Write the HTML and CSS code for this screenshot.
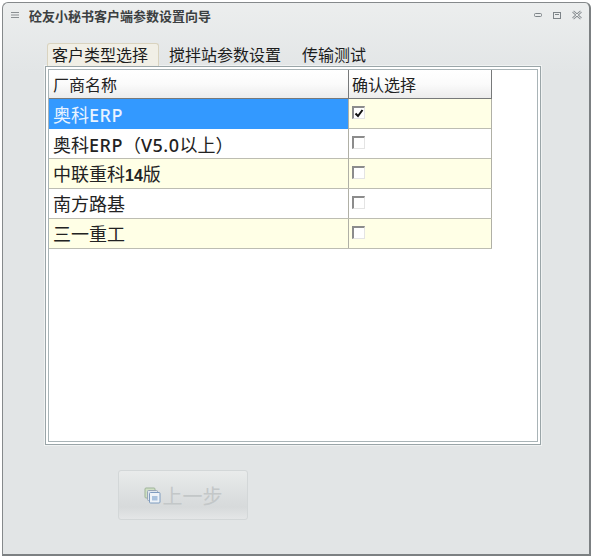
FILE: index.html
```html
<!DOCTYPE html>
<html lang="zh-CN">
<head>
    <meta charset="UTF-8">
    <meta name="viewport" content="width=device-width, initial-scale=1.0">
    <title>砼友小秘书客户端参数设置向导</title>
    <link rel="stylesheet" href="styles.css">
</head>
<body>
    <div class="window">
        <div class="title-bar">
            <svg class="sys-icon" width="10" height="8" viewBox="0 0 10 8">
                <path d="M1 1.5h8M1 4h8M1 6.5h8" stroke="#8a8f92" stroke-width="1" fill="none"/>
            </svg>
            <span class="title-text">砼友小秘书客户端参数设置向导</span>
            <div class="win-buttons">
                <svg width="10" height="6" viewBox="0 0 10 6">
                    <rect x="1.5" y="1.5" width="7" height="3" rx="1" fill="none" stroke="#7d8488"/>
                </svg>
                <svg width="10" height="9" viewBox="0 0 10 9">
                    <rect x="1.5" y="1.5" width="7" height="6" fill="none" stroke="#7d8488"/>
                    <path d="M3 3.5h4" stroke="#7d8488"/>
                </svg>
                <svg width="12" height="10" viewBox="0 0 12 10">
                    <path d="M2 1.5l8 7M10 1.5l-8 7" stroke="#868c90" stroke-width="2.6" fill="none"/>
                    <path d="M2 1.5l8 7M10 1.5l-8 7" stroke="#f2f4f4" stroke-width="1" fill="none"/>
                </svg>
            </div>
        </div>

        <div class="tabs">
            <div class="tab active">客户类型选择</div>
            <div class="tab">搅拌站参数设置</div>
            <div class="tab">传输测试</div>
        </div>

        <div class="tab-panel">
            <div class="grid">
                <div class="grid-row header">
                    <div class="cell name">厂商名称</div>
                    <div class="cell check">确认选择</div>
                </div>
                <div class="grid-row odd selected">
                    <div class="cell name">奥科<span class="latin">ERP</span></div>
                    <div class="cell check"><span class="checkbox checked">
                        <svg width="10" height="9" viewBox="0 0 10 9"><path d="M1.5 4.5l2.5 2.5 4.5-6" stroke="#111" stroke-width="2" fill="none"/></svg>
                    </span></div>
                </div>
                <div class="grid-row">
                    <div class="cell name">奥科<span class="latin">ERP</span>（<span class="latin">V5.0</span>以上）</div>
                    <div class="cell check"><span class="checkbox"></span></div>
                </div>
                <div class="grid-row odd">
                    <div class="cell name">中联重科<span class="digits">14</span>版</div>
                    <div class="cell check"><span class="checkbox"></span></div>
                </div>
                <div class="grid-row">
                    <div class="cell name">南方路基</div>
                    <div class="cell check"><span class="checkbox"></span></div>
                </div>
                <div class="grid-row odd">
                    <div class="cell name">三一重工</div>
                    <div class="cell check"><span class="checkbox"></span></div>
                </div>
            </div>
        </div>

        <div class="actions">
            <button class="prev-btn" disabled>
                <svg width="17" height="17" viewBox="0 0 17 17">
                    <rect x="1" y="1" width="10" height="10" rx="1" fill="#cfe0c4" stroke="#9fb39a"/>
                    <rect x="3.5" y="3.5" width="10" height="10" rx="1" fill="#dfe6ee" stroke="#9aa8b8"/>
                    <rect x="5.5" y="5.5" width="10.5" height="10.5" rx="1" fill="#eef3f8" stroke="#7f9cc0"/>
                    <rect x="8" y="9" width="5.5" height="4.5" fill="#a9c2de"/>
                </svg>
                <span>上一步</span>
            </button>
        </div>
    </div>
</body>
</html>
```

FILE: styles.css
```css
html, body {
    margin: 0;
    height: 100%;
}
body {
    background-color: #fff;
    font-family: "Liberation Sans", "Noto Sans CJK SC", sans-serif;
    color: #222;
}
.window {
    box-sizing: border-box;
    width: 589px;
    height: 554px;
    margin: 2px 0 0 2px;
    background: linear-gradient(#eceeee 0, #e2e5e6 70px);
    border: 1px solid #85898b;
    border-right: 2px solid #7c8082;
    border-bottom: 2px solid #7c8082;
    border-radius: 6px 6px 0 0;
}
.title-bar {
    display: flex;
    align-items: center;
    height: 24px;
    padding: 0 6px 0 7px;
}
.sys-icon {
    margin-right: 9px;
}
.title-text {
    font-size: 13px;
    font-weight: bold;
    color: #3c3f41;
}
.win-buttons {
    display: flex;
    align-items: center;
    gap: 9px;
    margin-left: auto;
}

.tabs {
    display: flex;
    height: 24px;
    margin-top: 16px;
    padding-left: 44px;
}
.tab {
    box-sizing: border-box;
    height: 23px;
    padding: 1px 0 0 6px;
    margin-right: 15px;
    font-size: 16px;
    line-height: 23px;
    color: #1c1c1c;
}
.tab.active {
    width: 112px;
    margin-right: 4px;
    background-color: #f1efe6;
    border: 1px solid #d9d3bf;
    border-bottom: none;
    border-radius: 3px 3px 0 0;
    line-height: 22px;
    padding-left: 4px;
}

.tab-panel {
    box-sizing: border-box;
    width: 496px;
    height: 379px;
    margin-left: 42px;
    margin-top: -1px;
    padding: 2px;
    background-color: #fff;
    border: 1px solid #9aa5a8;
    box-shadow: 0 0 0 1px #f0f2f2;
}
.grid {
    box-sizing: border-box;
    height: 100%;
    border: 1px solid #a9b4b7;
    background-color: #fff;
}
.grid-row {
    display: grid;
    grid-template-columns: 300px 143px;
    width: 443px;
    height: 30px;
    box-sizing: border-box;
    border-bottom: 1px solid #bdbdb2;
    font-size: 18px;
}
.grid-row.odd {
    background-color: #ffffe6;
}
.grid-row.header {
    height: 29px;
    background: linear-gradient(#fff 0, #fbfbfb 50%, #ececec 100%);
    border-bottom: 1px solid #77797a;
    font-size: 16px;
}
.cell {
    box-sizing: border-box;
    padding: 4px 0 0 4px;
    line-height: 25px;
    white-space: nowrap;
    border-right: 1px solid #b0b0a6;
}
.header .cell {
    padding-top: 3px;
    border-right-color: #77797a;
}
.latin {
    font-family: "Noto Sans", sans-serif;
    font-weight: 500;
    letter-spacing: 0.5px;
}
.digits {
    font-size: 16px;
    font-weight: bold;
}
.selected .name {
    background-color: #3399ff;
    color: #e9f3ff;
}
.check {
    padding: 0 0 0 3px;
}
.checkbox {
    display: flex;
    align-items: center;
    justify-content: center;
    box-sizing: border-box;
    width: 13px;
    height: 13px;
    margin-top: 7px;
    background-color: #fff;
    border: 1px solid #e4e4e4;
    border-top: 2px solid #8c8c8c;
    border-left: 2px solid #8c8c8c;
}
.header .check {
    padding: 3px 0 0 3px;
}

.actions {
    padding: 25px 0 0 115px;
}
.prev-btn {
    display: flex;
    align-items: center;
    justify-content: center;
    gap: 2px;
    width: 130px;
    height: 50px;
    padding: 0;
    background: linear-gradient(#e9ebeb 0, #dcdfe0 50%, #d7dadb 75%, #e4e6e7 100%);
    border: 1px solid #d3d7d8;
    border-radius: 3px;
    font-family: inherit;
    font-size: 20px;
    color: #c3c7c8;
}
```
